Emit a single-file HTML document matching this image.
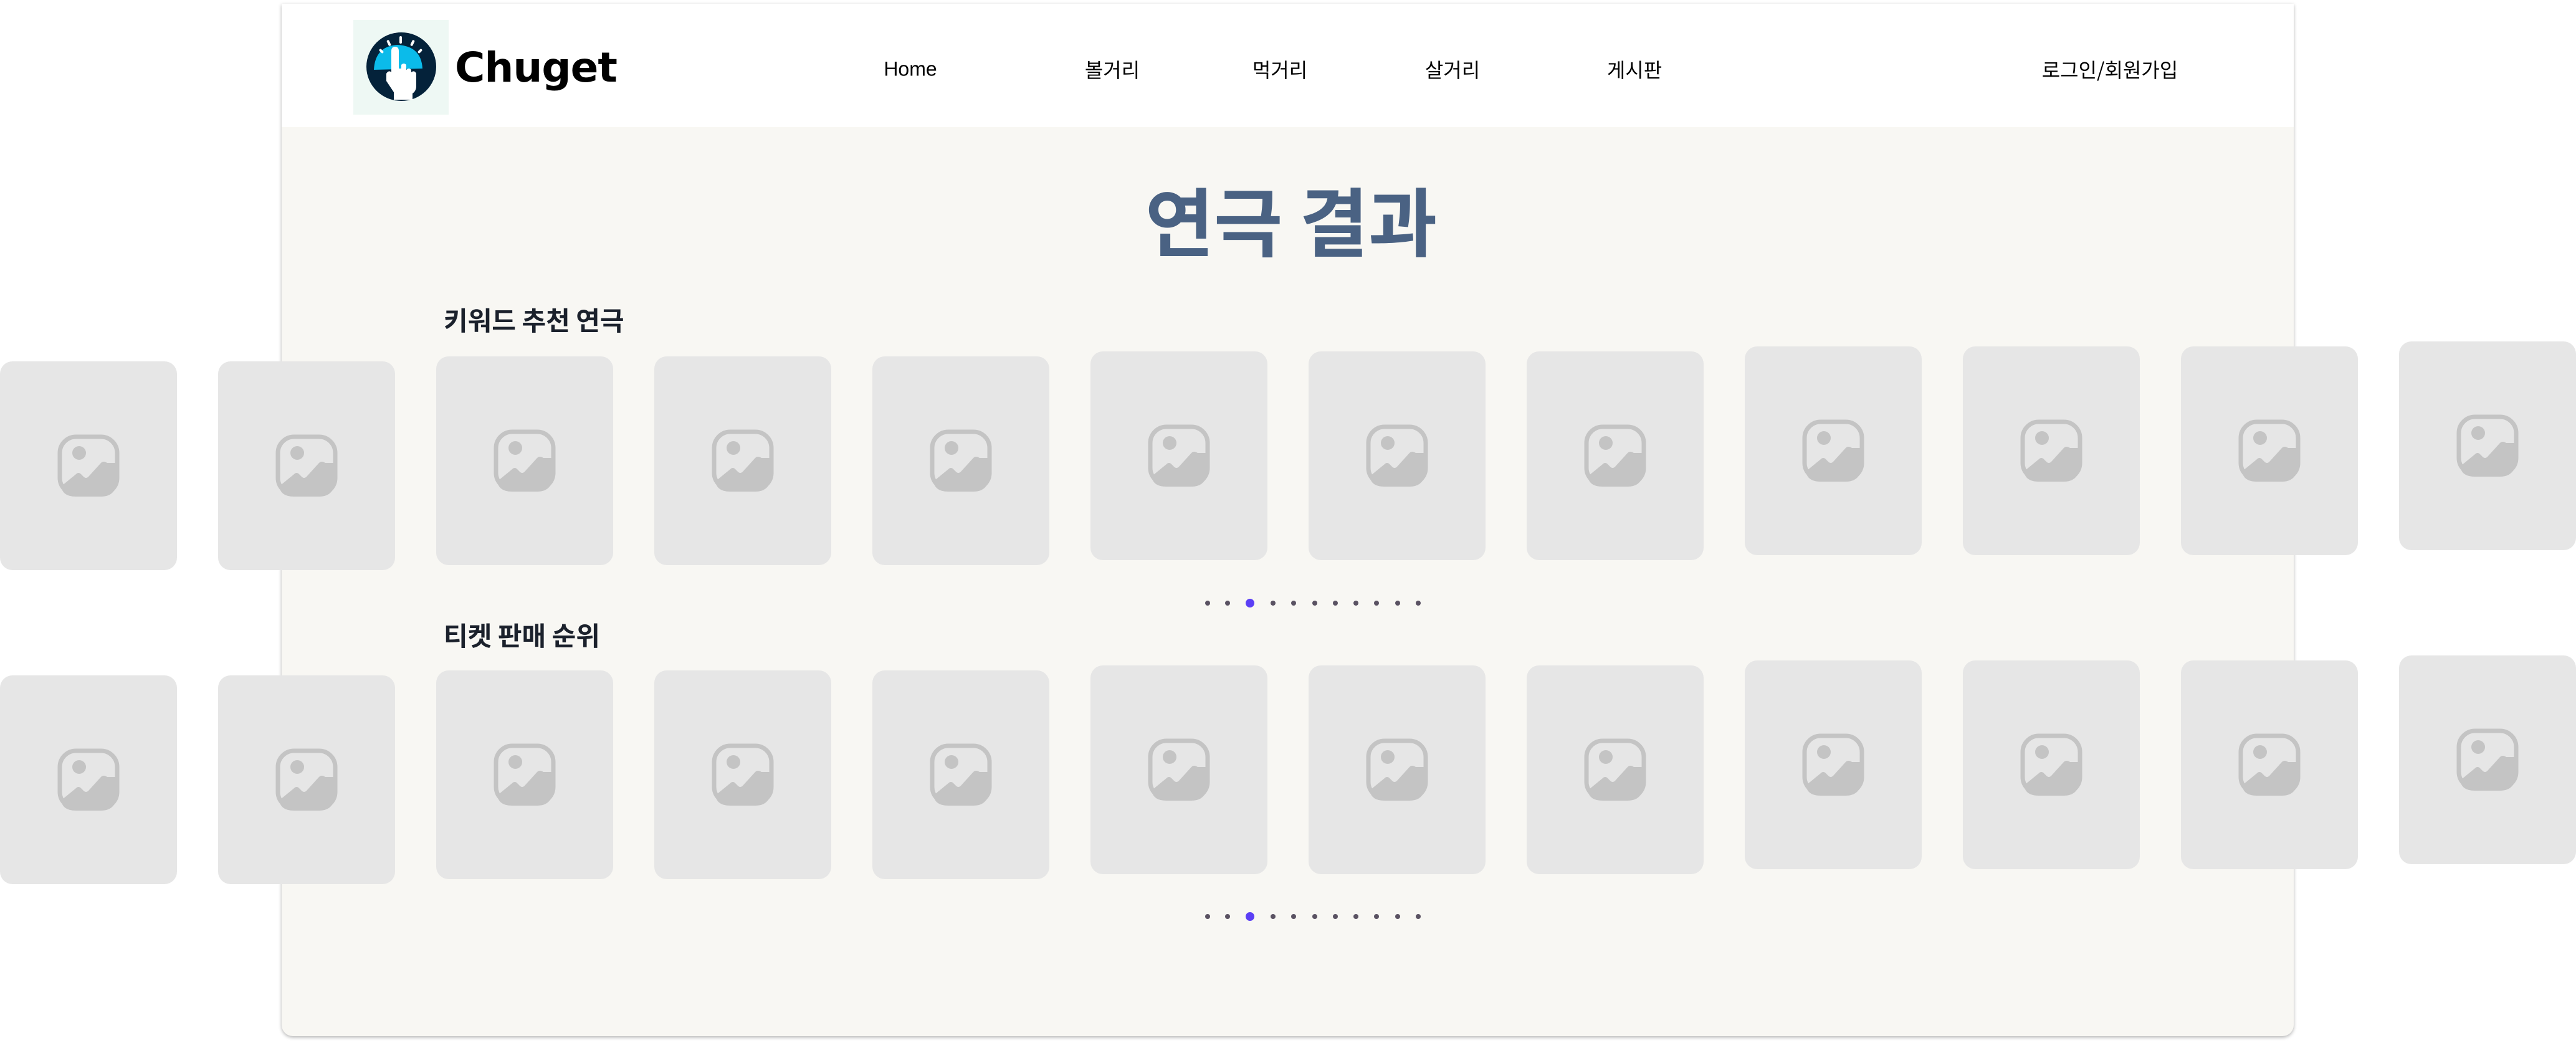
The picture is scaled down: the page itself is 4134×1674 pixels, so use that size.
<!DOCTYPE html>
<html><head><meta charset="utf-8"><style>
*{margin:0;padding:0;box-sizing:border-box}
body{width:4134px;height:1674px;background:#fff;position:relative;overflow:hidden;font-family:"Liberation Sans","Noto Sans CJK KR",sans-serif}
.frame{position:absolute;left:452px;top:6px;width:3229px;height:1657px;background:#f8f7f3;border-radius:0 0 18px 18px;box-shadow:0 2px 6px rgba(0,0,0,.3)}
.hdr{position:absolute;left:452px;top:6px;width:3229px;height:198px;background:#fff}
.nav{position:absolute;top:111px;transform:translate(-50%,-50%);font-size:32px;color:#000;white-space:nowrap;font-family:"Noto Sans CJK KR","Liberation Sans",sans-serif}
.title{position:absolute;left:0;width:4134px;text-align:center;top:290px;font-size:120px;line-height:1;font-weight:bold;color:#4a6283;font-family:"Noto Sans CJK KR",sans-serif;padding-left:10px}
.sub{position:absolute;left:712px;font-size:42px;line-height:1;font-weight:bold;color:#1b212c;font-family:"Noto Sans CJK KR",sans-serif}
.card{position:absolute;width:284px;height:335px;background:#e6e6e6;border-radius:20px}
.card svg{position:absolute;left:92px;top:117px}
.dot{position:absolute;width:8px;height:8px;border-radius:50%;background:#5a5262;transform:translate(-50%,-50%)}
.dot.a{width:14px;height:14px;background:#5b3ff5}
</style></head><body>
<div class="frame"></div>
<div class="hdr"></div>
<div style="position:absolute;left:567px;top:32px;width:153px;height:152px;background:#eef8f4"></div>
<svg style="position:absolute;left:580px;top:50px" width="128" height="115" viewBox="0 0 128 115">
<ellipse cx="64" cy="57" rx="56" ry="55" fill="#04223a"/>
<path d="M20 62 Q22 24 58 22 Q96 24 98 60 Z" fill="#0bbbea"/>
<g fill="#fff"><rect x="61" y="8" width="4" height="12" rx="2"/><rect x="42" y="14" width="4" height="10" rx="2" transform="rotate(-25 44 19)"/><rect x="80" y="14" width="4" height="10" rx="2" transform="rotate(25 82 19)"/><rect x="30" y="28" width="4" height="8" rx="2" transform="rotate(-45 32 32)"/><rect x="92" y="28" width="4" height="8" rx="2" transform="rotate(45 94 32)"/>
<path d="M48 32 Q48 25 54 25 Q60 25 60 32 L60 60 L64 60 L64 54 Q68 50 72 54 L72 62 Q76 58 80 62 L80 66 Q85 62 88 68 L88 88 Q88 96 82 100 L82 110 L52 110 L52 98 L40 80 L40 68 Q44 62 48 66 Z"/></g>
</svg>
<div style="position:absolute;left:730px;top:76px;font-size:66px;font-weight:bold;color:#000;line-height:1;font-family:'DejaVu Sans','Liberation Sans',sans-serif;letter-spacing:-1px">Chuget</div>
<div class="nav" style="left:1461px;font-family:'Liberation Sans',sans-serif">Home</div>
<div class="nav" style="left:1785px">볼거리</div>
<div class="nav" style="left:2054px">먹거리</div>
<div class="nav" style="left:2331px">살거리</div>
<div class="nav" style="left:2623px">게시판</div>
<div class="nav" style="left:3386px">로그인/회원가입</div>
<div class="title">연극 결과</div>
<div class="sub" style="top:492px">키워드 추천 연극</div>
<div class="sub" style="top:998px">티켓 판매 순위</div>
<div id="cards"></div>
<script>
var tops=[580,580,572,572,572,564,564,564,556,556,556,548];
var icon='<svg width="100" height="100" viewBox="0 0 100 100"><rect x="4" y="4" width="92" height="92" rx="26" fill="none" stroke="#c4c4c4" stroke-width="7"/><circle cx="35" cy="30" r="11" fill="#c4c4c4"/><path d="M8 82 L30 64 Q34 60 38 64 L42 68 Q46 72 50 68 L70 46 Q74 42 80 46 L96 46 L96 70 Q96 100 70 100 L30 100 Q6 100 6 80 Z" fill="#c4c4c4"/></svg>';
var h='';
for(var r=0;r<2;r++)for(var i=0;i<12;i++){h+='<div class="card" style="left:'+(350*i)+'px;top:'+(tops[i]+(r?504:0))+'px">'+icon+'</div>';}
var dx=[1938,1970,2006,2043,2076,2110,2143,2176,2209,2243,2276];
[968,1471].forEach(function(y){dx.forEach(function(x,k){h+='<div class="dot'+(k==2?' a':'')+'" style="left:'+x+'px;top:'+y+'px"></div>';});});
document.getElementById('cards').innerHTML=h;
</script>
</body></html>
